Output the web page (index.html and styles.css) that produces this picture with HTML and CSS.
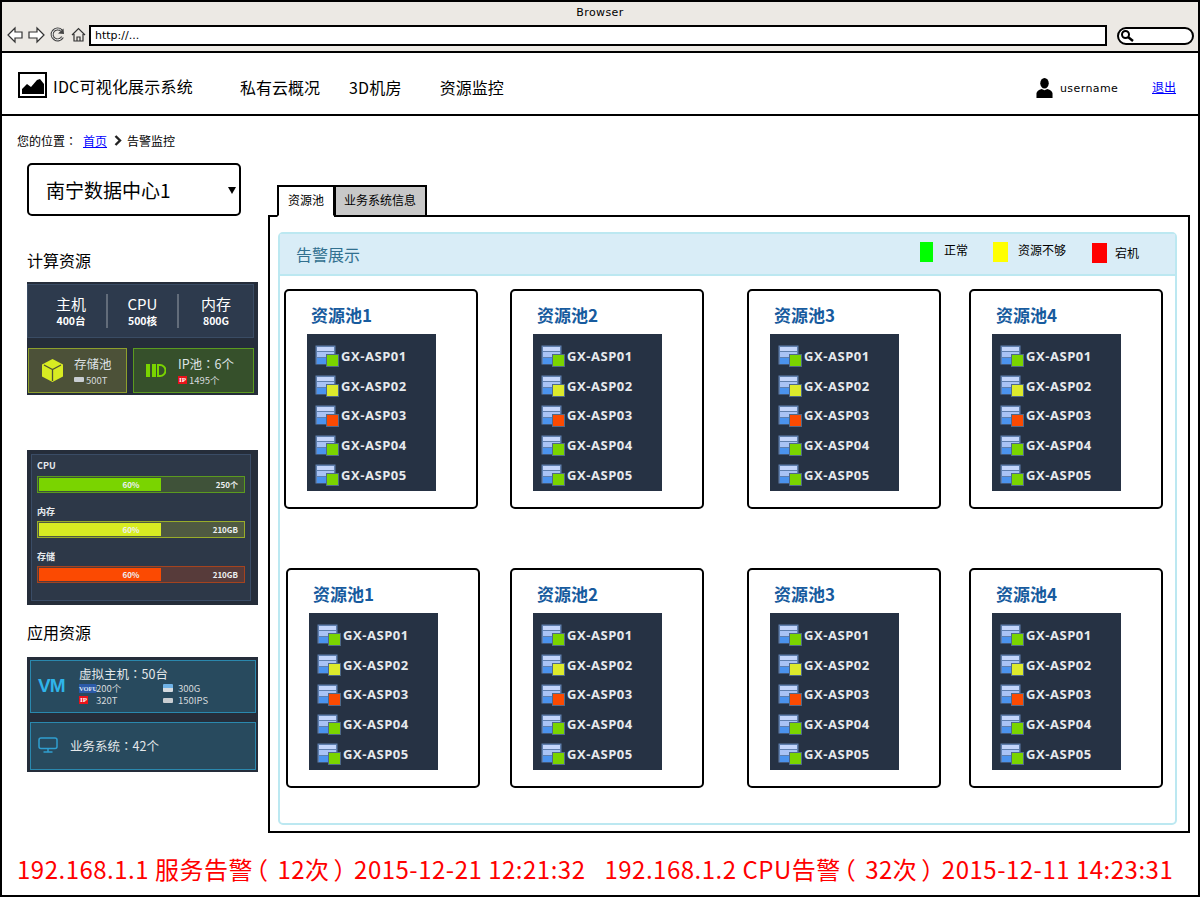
FILE: index.html
```html
<!DOCTYPE html>
<html lang="zh-CN">
<head>
  <meta charset="UTF-8">
  <title>IDC可视化展示系统</title>
  <link rel="stylesheet" href="styles.css">
</head>
<body>
  <!-- shared icons -->
  <svg class="defs" width="0" height="0">
    <symbol id="srv" viewBox="0 0 24 21">
      <rect x="0.5" y="0.5" width="20" height="19" fill="#5f7fae"/>
      <rect x="2" y="2" width="17" height="4" fill="#c3d5fb"/>
      <rect x="2" y="7" width="17" height="5" fill="#a9c3f5"/>
      <rect x="2" y="13" width="17" height="6" fill="#4b93ee"/>
    </symbol>
  </svg>

  <div class="frame">
    <!-- Browser chrome -->
    <div class="browser">
      <div class="browser-title">Browser</div>
      <div class="browser-bar">
        <svg class="nav-icons" width="82" height="18" viewBox="0 0 82 18" fill="#fff" stroke="#333" stroke-width="1.2">
          <path d="M1 9 L8 2 V6 H15 V12 H8 V16 Z"/>
          <path d="M37 9 L30 2 V6 H22 V12 H30 V16 Z"/>
          <path d="M54.500 4.500 A5.500 5.500 0 1 0 55.500 11" fill="none" stroke="#444" stroke-width="3"/>
          <path d="M54.500 4.500 A5.500 5.500 0 1 0 55.500 11" fill="none" stroke="#fff" stroke-width="1"/>
          <path d="M51 7.500 L56.500 2.500 L57 8 Z" fill="#444" stroke="none"/>
          <path d="M65 9 L71.500 2.500 L78 9 M67 8 V15 H76 V8 M70 15 V11 H73 V15" fill="none"/>
        </svg>
        <div class="address">http://...</div>
        <div class="search">
          <svg width="14" height="14" viewBox="0 0 14 14" fill="none" stroke="#000">
            <circle cx="5.500" cy="5.500" r="3.500" stroke-width="2"/>
            <path d="M8 8 L13 12" stroke-width="2.500"/>
          </svg>
        </div>
      </div>
    </div>

    <!-- Site header -->
    <header class="site-header">
      <div class="logo">
        <svg width="22" height="16" viewBox="0 0 22 16" fill="#000">
          <path d="M0 16 V11 L5 6 L9 9 L15 2 L18 1 L22 6 V16 Z"/>
        </svg>
      </div>
      <div class="site-name">IDC可视化展示系统</div>
      <nav class="main-nav">
        <a class="nav-a">私有云概况</a>
        <a class="nav-b">3D机房</a>
        <a class="nav-c">资源监控</a>
      </nav>
      <svg class="user-icon" width="17" height="20" viewBox="0 0 18 21" fill="#000">
        <ellipse cx="9" cy="5.500" rx="4.500" ry="5.500"/>
        <path d="M0.500 21 V16 Q1 13 6 11.500 L9 13 L12 11.500 Q17 13 17.500 16 V21 Z"/>
      </svg>
      <span class="username">username</span>
      <a class="logout" href="#">退出</a>
    </header>

    <main class="main">
      <div class="crumbs">
        <span>您的位置<span class="cp" lang="zh-TW">：</span></span>
        <a href="#">首页</a>
        <svg width="8" height="11" viewBox="0 0 8 11" fill="none" stroke="#222" stroke-width="2.400"><path d="M1.500 1 L6 5.500 L1.500 10"/></svg>
        <span>告警监控</span>
      </div>

      <div class="content">
        <!-- Left column -->
        <aside class="side">
          <div class="dc-select">南宁数据中心1<i class="caret"></i></div>

          <h3 class="side-title">计算资源</h3>
          <div class="dark-panel compute">
            <div class="compute-top">
              <div class="stat stat-a"><b>主机</b><small>400台</small></div>
              <div class="stat stat-b"><b>CPU</b><small>500核</small></div>
              <div class="stat stat-c"><b>内存</b><small>800G</small></div>
            </div>
            <div class="compute-tiles">
              <div class="tile tile-store">
                <svg width="23" height="25" viewBox="0 0 23 25">
                  <path d="M11.500 1 L22 6.500 V18.500 L11.500 24 L1 18.500 V6.500 Z" fill="#d8ec22"/>
                  <path d="M3 7 L11.500 11.500 L20 7 M11.500 11.500 V23" fill="none" stroke="#4c5138" stroke-width="1.300"/>
                </svg>
                <div class="tile-text">
                  <div class="tile-name">存储池</div>
                  <div class="tile-sub"><i class="disk"></i>500T</div>
                </div>
              </div>
              <div class="tile tile-ip">
                <svg width="20" height="13" viewBox="0 0 20 13">
                  <rect width="4" height="13" fill="#7ad400"/>
                  <rect x="6" width="4" height="13" fill="#7ad400"/>
                  <path d="M12 1 H14 A5.500 5.500 0 0 1 14 12 H12 Z" fill="none" stroke="#7ad400" stroke-width="2"/>
                </svg>
                <div class="tile-text">
                  <div class="tile-name">IP池<span class="cp" lang="zh-TW">：</span>6个</div>
                  <div class="tile-sub"><i class="badge-ip">IP</i>1495个</div>
                </div>
              </div>
            </div>
          </div>

          <div class="dark-panel usage">
            <div class="usage-inner">
              <div class="bar-label">CPU</div>
              <div class="bar bar-green"><div class="bar-fill">60%</div><span>250个</span></div>
              <div class="bar-label">内存</div>
              <div class="bar bar-yellow"><div class="bar-fill">60%</div><span>210GB</span></div>
              <div class="bar-label">存储</div>
              <div class="bar bar-red"><div class="bar-fill">60%</div><span>210GB</span></div>
            </div>
          </div>

          <h3 class="side-title app-title">应用资源</h3>
          <div class="dark-panel apps">
            <div class="app-tile vm-tile">
              <div class="vm-logo">VM</div>
              <div>
                <div class="vm-name">虚拟主机<span class="cp" lang="zh-TW">：</span>50台</div>
                <div class="vm-grid">
                  <span><i class="badge-slot"><i class="badge-vofu">VOFU</i></i>200个</span>
                  <span><i class="disk disk-blue"></i>300G</span>
                  <span><i class="badge-slot"><i class="badge-ip">IP</i></i>320T</span>
                  <span><i class="disk"></i>150IPS</span>
                </div>
              </div>
            </div>
            <div class="app-tile biz-tile">
              <svg width="20" height="16" viewBox="0 0 20 16" fill="none" stroke="#2f9fd0" stroke-width="1.500">
                <rect x="1" y="1" width="18" height="10.500" rx="2"/>
                <path d="M10 12 V15 M5.500 15 H14.500"/>
              </svg>
              <span>业务系统<span class="cp" lang="zh-TW">：</span>42个</span>
            </div>
          </div>
        </aside>

        <!-- Right column -->
        <section class="work">
          <div class="tabs">
            <div class="tab tab-on">资源池</div>
            <div class="tab">业务系统信息</div>
          </div>
          <div class="tab-body">
            <div class="alarm-panel">
              <div class="alarm-head">
                <div class="alarm-title">告警展示</div>
                <div class="legend">
                  <i class="sw sw-green"></i><span class="lg-a">正常</span>
                  <i class="sw sw-yellow"></i><span class="lg-b">资源不够</span>
                  <i class="sw sw-red"></i><span class="lg-c">宕机</span>
                </div>
              </div>

              <div class="pool-row">
                <div class="pool p1">
                  <div class="pool-name">资源池1</div>
                  <ul class="hosts">
                    <li class="ok"><svg><use href="#srv"/></svg>GX-ASP01</li>
                    <li class="warn"><svg><use href="#srv"/></svg>GX-ASP02</li>
                    <li class="bad"><svg><use href="#srv"/></svg>GX-ASP03</li>
                    <li class="ok"><svg><use href="#srv"/></svg>GX-ASP04</li>
                    <li class="ok"><svg><use href="#srv"/></svg>GX-ASP05</li>
                  </ul>
                </div>
                <div class="pool p2">
                  <div class="pool-name">资源池2</div>
                  <ul class="hosts">
                    <li class="ok"><svg><use href="#srv"/></svg>GX-ASP01</li>
                    <li class="warn"><svg><use href="#srv"/></svg>GX-ASP02</li>
                    <li class="bad"><svg><use href="#srv"/></svg>GX-ASP03</li>
                    <li class="ok"><svg><use href="#srv"/></svg>GX-ASP04</li>
                    <li class="ok"><svg><use href="#srv"/></svg>GX-ASP05</li>
                  </ul>
                </div>
                <div class="pool p3">
                  <div class="pool-name">资源池3</div>
                  <ul class="hosts">
                    <li class="ok"><svg><use href="#srv"/></svg>GX-ASP01</li>
                    <li class="warn"><svg><use href="#srv"/></svg>GX-ASP02</li>
                    <li class="bad"><svg><use href="#srv"/></svg>GX-ASP03</li>
                    <li class="ok"><svg><use href="#srv"/></svg>GX-ASP04</li>
                    <li class="ok"><svg><use href="#srv"/></svg>GX-ASP05</li>
                  </ul>
                </div>
                <div class="pool p4">
                  <div class="pool-name">资源池4</div>
                  <ul class="hosts">
                    <li class="ok"><svg><use href="#srv"/></svg>GX-ASP01</li>
                    <li class="warn"><svg><use href="#srv"/></svg>GX-ASP02</li>
                    <li class="bad"><svg><use href="#srv"/></svg>GX-ASP03</li>
                    <li class="ok"><svg><use href="#srv"/></svg>GX-ASP04</li>
                    <li class="ok"><svg><use href="#srv"/></svg>GX-ASP05</li>
                  </ul>
                </div>
              </div>

              <div class="pool-row row-two">
                <div class="pool p1">
                  <div class="pool-name">资源池1</div>
                  <ul class="hosts">
                    <li class="ok"><svg><use href="#srv"/></svg>GX-ASP01</li>
                    <li class="warn"><svg><use href="#srv"/></svg>GX-ASP02</li>
                    <li class="bad"><svg><use href="#srv"/></svg>GX-ASP03</li>
                    <li class="ok"><svg><use href="#srv"/></svg>GX-ASP04</li>
                    <li class="ok"><svg><use href="#srv"/></svg>GX-ASP05</li>
                  </ul>
                </div>
                <div class="pool p2">
                  <div class="pool-name">资源池2</div>
                  <ul class="hosts">
                    <li class="ok"><svg><use href="#srv"/></svg>GX-ASP01</li>
                    <li class="warn"><svg><use href="#srv"/></svg>GX-ASP02</li>
                    <li class="bad"><svg><use href="#srv"/></svg>GX-ASP03</li>
                    <li class="ok"><svg><use href="#srv"/></svg>GX-ASP04</li>
                    <li class="ok"><svg><use href="#srv"/></svg>GX-ASP05</li>
                  </ul>
                </div>
                <div class="pool p3">
                  <div class="pool-name">资源池3</div>
                  <ul class="hosts">
                    <li class="ok"><svg><use href="#srv"/></svg>GX-ASP01</li>
                    <li class="warn"><svg><use href="#srv"/></svg>GX-ASP02</li>
                    <li class="bad"><svg><use href="#srv"/></svg>GX-ASP03</li>
                    <li class="ok"><svg><use href="#srv"/></svg>GX-ASP04</li>
                    <li class="ok"><svg><use href="#srv"/></svg>GX-ASP05</li>
                  </ul>
                </div>
                <div class="pool p4">
                  <div class="pool-name">资源池4</div>
                  <ul class="hosts">
                    <li class="ok"><svg><use href="#srv"/></svg>GX-ASP01</li>
                    <li class="warn"><svg><use href="#srv"/></svg>GX-ASP02</li>
                    <li class="bad"><svg><use href="#srv"/></svg>GX-ASP03</li>
                    <li class="ok"><svg><use href="#srv"/></svg>GX-ASP04</li>
                    <li class="ok"><svg><use href="#srv"/></svg>GX-ASP05</li>
                  </ul>
                </div>
              </div>
            </div>
          </div>
        </section>
      </div>

      <div class="ticker">
        <span>192.168.1.1 服务告警<span class="par-l">（</span>12次<span class="par-r">）</span>2015-12-21 12:21:32</span>
        <span>192.168.1.2 CPU告警<span class="par-l">（</span>32次<span class="par-r">）</span>2015-12-11 14:23:31</span>
      </div>
    </main>
  </div>
</body>
</html>
```

FILE: styles.css
```css
/* Whole page is one wireframe window. */
html, body {
  margin: 0;
  padding: 0;
  height: 100%;
  overflow: hidden;
}
body {
  font-family: "Noto Sans CJK SC", "Noto Sans", sans-serif;
  background: #fff;
  color: #000;
}
.defs {
  display: none;
}
/* centred full-width punctuation */
.cp {
  font-family: "Noto Sans CJK TC", sans-serif;
}
.frame {
  width: 1200px;
  height: 897px;
  box-sizing: border-box;
  border: 2px solid #000;
  display: flex;
  flex-direction: column;
}

/* Browser chrome */
.browser {
  height: 49px;
  background: #ece9e4;
  border-bottom: 2px solid #000;
  flex: none;
}
.browser-title {
  height: 23px;
  line-height: 22px;
  text-align: center;
  font-family: "DejaVu Sans", sans-serif;
  font-size: 11px;
  letter-spacing: 0.4px;
}
.browser-bar {
  display: flex;
  align-items: center;
  height: 21px;
  padding-left: 5px;
}
.nav-icons {
  flex: none;
  margin-top: -2px;
}
.address {
  width: 1018px;
  height: 21px;
  box-sizing: border-box;
  border: 2px solid #000;
  background: #fff;
  font-family: "DejaVu Sans", sans-serif;
  font-size: 11px;
  line-height: 17px;
  padding-left: 4px;
}
.search {
  width: 77px;
  height: 18px;
  box-sizing: border-box;
  margin-left: 10px;
  border: 2px solid #000;
  border-radius: 9px;
  background: #fff;
  padding-left: 1px;
  display: flex;
  align-items: center;
}

/* Site header */
.site-header {
  height: 63px;
  box-sizing: border-box;
  border-bottom: 2px solid #000;
  display: flex;
  align-items: center;
  flex: none;
  padding: 4px 0 0 16px;
}
.logo {
  width: 29px;
  height: 26px;
  box-sizing: border-box;
  border: 2px solid #000;
  display: flex;
  align-items: flex-end;
  justify-content: center;
  padding-bottom: 2px;
  margin-top: -2px;
}
.site-name {
  width: 187px;
  margin-left: 6px;
  font-size: 16px;
  letter-spacing: 0.2px;
}
.main-nav {
  display: flex;
  font-size: 16px;
  width: 796px;
  margin-top: 2px;
}
.nav-b {
  margin-left: 29px;
  letter-spacing: 0.2px;
}
.nav-c {
  margin-left: 38px;
}
.user-icon {
  flex: none;
  margin-top: 4px;
}
.username {
  margin-left: 7px;
  margin-top: 6px;
  width: 92px;
  font-family: "DejaVu Sans", sans-serif;
  font-size: 11px;
  letter-spacing: 0.4px;
}
.logout {
  font-size: 12px;
  color: #00f;
  margin-top: 2px;
}

/* Main area */
.main {
  flex: 1;
  min-height: 0;
  display: flex;
  flex-direction: column;
}
.crumbs {
  height: 47px;
  box-sizing: border-box;
  padding: 2px 0 0 15px;
  display: flex;
  align-items: center;
  font-size: 12px;
  flex: none;
}
.crumbs a {
  color: #00f;
  margin-left: 6px;
}
.crumbs svg {
  margin: 0 5px 0 7px;
}
.content {
  display: flex;
  height: 670px;
  flex: none;
}

/* Left column */
.side {
  width: 231px;
  margin-left: 25px;
  flex: none;
}
.dc-select {
  width: 214px;
  height: 53px;
  box-sizing: border-box;
  border: 2px solid #000;
  border-radius: 5px;
  padding-left: 17px;
  font-size: 19px;
  line-height: 49px;
  position: relative;
}
.caret {
  position: absolute;
  right: 3px;
  top: 22px;
  border-left: 4px solid transparent;
  border-right: 4px solid transparent;
  border-top: 7px solid #000;
}
.side-title {
  margin: 33px 0 0;
  height: 33px;
  font-size: 16px;
  line-height: 22px;
  font-weight: 400;
}
.app-title {
  margin-top: 16px;
  height: 36px;
}
.dark-panel {
  background: #252d3a;
  color: #fff;
  box-sizing: border-box;
}

/* compute block */
.compute {
  height: 113px;
  padding-top: 2px;
  padding-right: 4px;
}
.compute-top {
  height: 54px;
  box-sizing: border-box;
  background: #2d3a4d;
  border: 1px solid #3a4c64;
  display: flex;
  align-items: center;
}
.stat {
  height: 34px;
  box-sizing: border-box;
  text-align: center;
  border-left: 2px solid #626c7a;
}
.stat-a {
  width: 78px;
  border-left: 0;
  padding-left: 8px;
}
.stat-b {
  width: 71px;
}
.stat-c {
  width: 76px;
}
.stat b {
  display: block;
  font-size: 15px;
  font-weight: 400;
  line-height: 20px;
}
.stat small {
  display: block;
  font-size: 10.500px;
  font-weight: 700;
  line-height: 14px;
}
.compute-tiles {
  display: flex;
  gap: 6px;
  margin: 10px 0 0 1px;
}
.tile {
  height: 45px;
  box-sizing: border-box;
  display: flex;
  align-items: center;
}
.tile-store {
  width: 99px;
  background: #4c5138;
  border: 1px solid #8d9f2c;
  padding-left: 12px;
}
.tile-ip {
  flex: 1;
  background: #36502b;
  border: 1px solid #5b9a1f;
  padding-left: 12px;
}
.tile-store .tile-text {
  margin-left: 10px;
}
.tile-ip .tile-text {
  margin-left: 12px;
}
.tile-name {
  font-size: 12.500px;
  line-height: 18px;
  color: #dfe3e6;
}
.tile-sub {
  font-size: 9.500px;
  line-height: 14px;
  color: #d5d9dc;
  display: flex;
  align-items: center;
  gap: 2px;
}
.disk {
  display: inline-block;
  width: 10px;
  height: 5px;
  background: #c9ced2;
  border-radius: 1px;
}
.disk-blue {
  height: 8px;
  background: linear-gradient(#6fb2e6 55%, #d5dbe0 55%);
}
.badge-ip {
  display: inline-block;
  width: 9px;
  height: 8px;
  background: #e8131a;
  color: #fff;
  font-family: "Liberation Serif", serif;
  font-style: normal;
  font-weight: 700;
  font-size: 7px;
  line-height: 8px;
  text-align: center;
}
.badge-vofu {
  display: block;
  width: 17px;
  height: 9px;
  background: #2b5aa8;
  color: #dfe8f6;
  font-family: "Liberation Serif", serif;
  font-style: normal;
  font-weight: 700;
  font-size: 6.500px;
  line-height: 9px;
  text-align: center;
}
.badge-slot {
  display: flex;
  width: 17px;
  flex: none;
}

/* usage bars */
.usage {
  height: 155px;
  margin-top: 55px;
  padding: 4px 7px 4px 4px;
}
.usage-inner {
  height: 147px;
  box-sizing: border-box;
  background: #2d3848;
  border: 1px solid #3a4c66;
  padding: 5px 5px 0;
}
.bar-label {
  font-size: 9px;
  font-weight: 700;
  line-height: 11px;
  height: 15px;
  color: #e8ebee;
}
.bar-label:first-child {
  height: 16px;
}
.bar {
  height: 17px;
  box-sizing: border-box;
  border: 1px solid;
  padding: 1px;
  margin-bottom: 13px;
  display: flex;
  align-items: stretch;
  justify-content: space-between;
  font-size: 8px;
  font-weight: 700;
  line-height: 13px;
  color: #eef0f2;
}
.bar-fill {
  width: 122px;
  text-align: center;
  padding-left: 62px;
  box-sizing: border-box;
}
.bar span {
  padding-right: 5px;
}
.bar-green {
  border-color: #5b9a1f;
  background: #3f5239;
}
.bar-green .bar-fill {
  background: #7ad400;
}
.bar-yellow {
  border-color: #99ad2a;
  background: #4f5a42;
}
.bar-yellow .bar-fill {
  background: #d8ec22;
}
.bar-red {
  border-color: #a4431f;
  background: #573b3a;
}
.bar-red .bar-fill {
  background: #fb4a02;
}

/* app tiles */
.apps {
  height: 115px;
  padding: 3px 2px 0 3px;
}
.app-tile {
  box-sizing: border-box;
  background: #284a5e;
  border: 1px solid #2a88ae;
  display: flex;
  align-items: center;
}
.vm-tile {
  height: 53px;
  margin-bottom: 9px;
  padding: 0 0 2px 7px;
}
.vm-logo {
  width: 41px;
  font-family: "Liberation Sans", sans-serif;
  font-size: 19px;
  font-weight: 700;
  color: #2fb4ea;
  letter-spacing: -1px;
}
.vm-name {
  font-size: 12.500px;
  line-height: 17px;
  color: #e4e8ea;
}
.vm-grid {
  display: grid;
  grid-template-columns: 84px 60px;
  font-size: 9.500px;
  line-height: 12px;
  color: #d5d9dc;
}
.vm-grid span {
  display: flex;
  align-items: center;
}
.vm-grid .disk {
  margin-right: 5px;
}
.biz-tile {
  height: 48px;
  padding: 0 0 2px 7px;
  font-size: 12.500px;
  color: #e4e8ea;
}
.biz-tile span {
  margin-left: 12px;
}
.biz-tile span span {
  margin-left: 0;
}

/* Right column */
.work {
  margin-left: 10px;
  margin-top: 22px;
  width: 922px;
  flex: none;
}
.tabs {
  display: flex;
  height: 30px;
  margin-left: 9px;
  position: relative;
  z-index: 1;
}
.tab {
  height: 32px;
  box-sizing: border-box;
  border: 2px solid #000;
  background: #c8c8c8;
  font-size: 12px;
  line-height: 26px;
  padding: 0 9px 0 8px;
  margin-left: -1px;
}
.tab-on {
  background: #fff;
  border-bottom-color: #fff;
  margin-left: 0;
  padding: 0 9px;
}
.tab-body {
  height: 618px;
  box-sizing: border-box;
  border: 2px solid #000;
  padding: 15px 11px 6px 8px;
}
.alarm-panel {
  height: 593px;
  box-sizing: border-box;
  border: 2px solid #bce8f1;
  border-radius: 5px;
}
.alarm-head {
  height: 42px;
  box-sizing: border-box;
  background: #d9edf7;
  border-bottom: 2px solid #bce8f1;
  display: flex;
  align-items: center;
}
.alarm-title {
  margin-left: 16px;
  width: 624px;
  font-size: 16px;
  color: #31708f;
}
.legend {
  display: flex;
  align-items: center;
  font-size: 12px;
  height: 40px;
}
.sw {
  width: 13px;
  height: 20px;
  display: block;
  margin-top: -4px;
}
.sw-green {
  background: #0f0;
}
.sw-yellow {
  width: 15px;
  background: #ff0;
  margin-left: 25px;
}
.sw-red {
  width: 15px;
  background: #f00;
  margin-left: 26px;
  margin-top: -2px;
}
.lg-a {
  margin-left: 11px;
  margin-top: -10px;
}
.lg-b {
  margin-left: 10px;
  margin-top: -10px;
}
.lg-c {
  margin-left: 8px;
  margin-top: -4px;
}

/* Pool cards */
.pool-row {
  display: flex;
  margin-top: 13px;
  margin-left: 4px;
}
.row-two {
  margin-top: 59px;
}
.pool {
  width: 194px;
  height: 220px;
  box-sizing: border-box;
  border: 2px solid #000;
  border-radius: 5px;
  padding-left: 21px;
  flex: none;
}
.row-two .p1 {
  margin-left: 2px;
}
.p2 {
  margin-left: 32px;
}
.row-two .p2 {
  margin-left: 30px;
}
.p3 {
  margin-left: 43px;
}
.p4 {
  margin-left: 28px;
}
.pool-name {
  height: 43px;
  padding-left: 4px;
  font-size: 17px;
  font-weight: 700;
  line-height: 48px;
  color: #175b9e;
}
.hosts {
  list-style: none;
  margin: 0;
  padding: 7px 0 0 8px;
  width: 129px;
  height: 157px;
  box-sizing: border-box;
  background: #263244;
}
.hosts li {
  display: flex;
  align-items: center;
  height: 29.750px;
  font-family: "Open Sans", sans-serif;
  font-size: 13px;
  font-weight: 700;
  letter-spacing: 0.55px;
  color: #e6eaee;
  position: relative;
}
.hosts svg {
  width: 24px;
  height: 21px;
  margin-right: 2px;
}
/* coloured status square over the server icon */
.hosts li::after {
  content: "";
  position: absolute;
  left: 11px;
  top: 13px;
  width: 11px;
  height: 11px;
  border: 1px solid #4f6a8a;
}
.ok::after {
  background: #7ad400;
}
.warn::after {
  background: #dcea2c;
}
.bad::after {
  background: #fb4a02;
}

/* Alarm ticker */
.ticker {
  display: flex;
  gap: 19px;
  padding-left: 15px;
  margin-top: 19px;
  font-size: 24px;
  letter-spacing: 0.5px;
  line-height: 34px;
  color: #f00;
  white-space: nowrap;
}
/* half-width bracket glyphs, spaced out so they sit mid-cell */
.par-l {
  font-feature-settings: "halt";
  margin: 0 9px 0 3px;
}
.par-r {
  font-feature-settings: "halt";
  margin: 0 8px 0 4px;
}
```
